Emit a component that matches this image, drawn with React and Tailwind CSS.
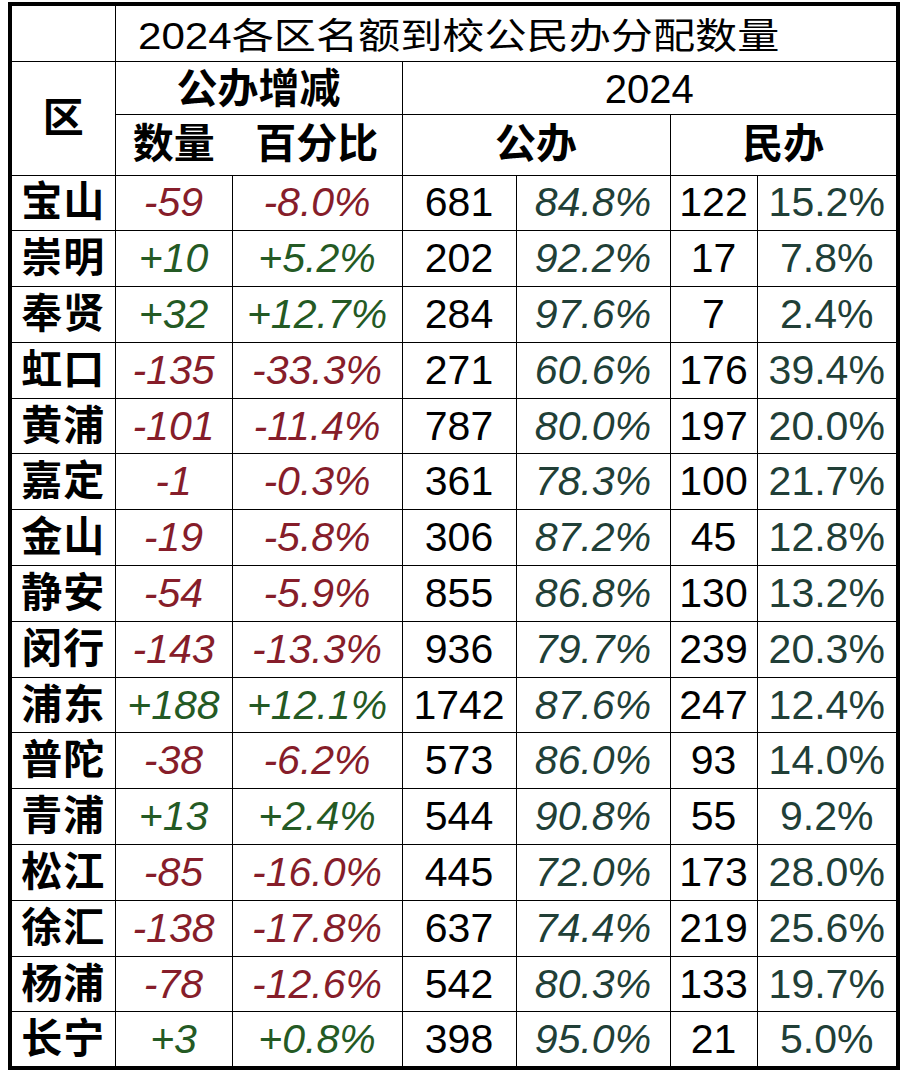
const rows = [
  ["宝山", "-59", "-8.0%", "681", "84.8%", "122", "15.2%"],
  ["崇明", "+10", "+5.2%", "202", "92.2%", "17", "7.8%"],
  ["奉贤", "+32", "+12.7%", "284", "97.6%", "7", "2.4%"],
  ["虹口", "-135", "-33.3%", "271", "60.6%", "176", "39.4%"],
  ["黄浦", "-101", "-11.4%", "787", "80.0%", "197", "20.0%"],
  ["嘉定", "-1", "-0.3%", "361", "78.3%", "100", "21.7%"],
  ["金山", "-19", "-5.8%", "306", "87.2%", "45", "12.8%"],
  ["静安", "-54", "-5.9%", "855", "86.8%", "130", "13.2%"],
  ["闵行", "-143", "-13.3%", "936", "79.7%", "239", "20.3%"],
  ["浦东", "+188", "+12.1%", "1742", "87.6%", "247", "12.4%"],
  ["普陀", "-38", "-6.2%", "573", "86.0%", "93", "14.0%"],
  ["青浦", "+13", "+2.4%", "544", "90.8%", "55", "9.2%"],
  ["松江", "-85", "-16.0%", "445", "72.0%", "173", "28.0%"],
  ["徐汇", "-138", "-17.8%", "637", "74.4%", "219", "25.6%"],
  ["杨浦", "-78", "-12.6%", "542", "80.3%", "133", "19.7%"],
  ["长宁", "+3", "+0.8%", "398", "95.0%", "21", "5.0%"],
];

const font = "font-['Liberation_Sans','Noto_Sans_CJK_SC',sans-serif]";

function changeColor(v) {
  return v.startsWith("+") ? "text-[#245a24]" : "text-[#861d2a]";
}

export default function App() {
  return (
    <div className={`bg-white min-h-[1071px] pt-[2px] pl-[8px] ${font}`}>
      <table className="table-fixed border-collapse border-[4px] border-black text-black">
        <colgroup>
          <col className="w-[105px]" />
          <col className="w-[117px]" />
          <col className="w-[170px]" />
          <col className="w-[114px]" />
          <col className="w-[154px]" />
          <col className="w-[87px]" />
          <col className="w-[141px]" />
        </colgroup>
        <thead>
          <tr className="h-[57px]">
            <th className="border border-black"></th>
            <th
              colSpan={6}
              className="border border-black text-left font-normal pl-[22px] pt-[8px] leading-none"
            >
              <span className="inline-block origin-left scale-x-[1.17] text-[36px] leading-none whitespace-nowrap">
                2024各区名额到校公民办分配数量
              </span>
            </th>
          </tr>
          <tr className="h-[53px]">
            <th
              rowSpan={2}
              className="border border-black text-[41px] font-bold leading-none"
            >
              区
            </th>
            <th
              colSpan={2}
              className="border border-black text-[41px] font-bold leading-none pt-[4px]"
            >
              公办增减
            </th>
            <th
              colSpan={4}
              className="border border-black text-[40px] font-normal leading-none pt-[2px]"
            >
              2024
            </th>
          </tr>
          <tr className="h-[61px]">
            <th className="border-b border-black text-[41px] font-bold leading-none">
              数量
            </th>
            <th className="border-b border-black text-[41px] font-bold leading-none">
              百分比
            </th>
            <th
              colSpan={2}
              className="border border-black text-[41px] font-bold leading-none"
            >
              公办
            </th>
            <th
              colSpan={2}
              className="border border-black text-[41px] font-bold leading-none"
            >
              民办
            </th>
          </tr>
        </thead>
        <tbody>
          {rows.map((r) => (
            <tr key={r[0]} className="h-[55.8px] text-[41px] leading-none">
              <td className="border border-black text-center font-bold tracking-[1px]">
                {r[0]}
              </td>
              <td className={`border border-black text-center italic ${changeColor(r[1])}`}>
                {r[1]}
              </td>
              <td className={`border border-black text-center italic ${changeColor(r[2])}`}>
                {r[2]}
              </td>
              <td className="border border-black text-center">{r[3]}</td>
              <td className="border border-black text-center italic text-[#213f37]">
                {r[4]}
              </td>
              <td className="border border-black text-center">{r[5]}</td>
              <td className="border border-black text-center text-[#213f37]">
                {r[6]}
              </td>
            </tr>
          ))}
        </tbody>
      </table>
    </div>
  );
}
